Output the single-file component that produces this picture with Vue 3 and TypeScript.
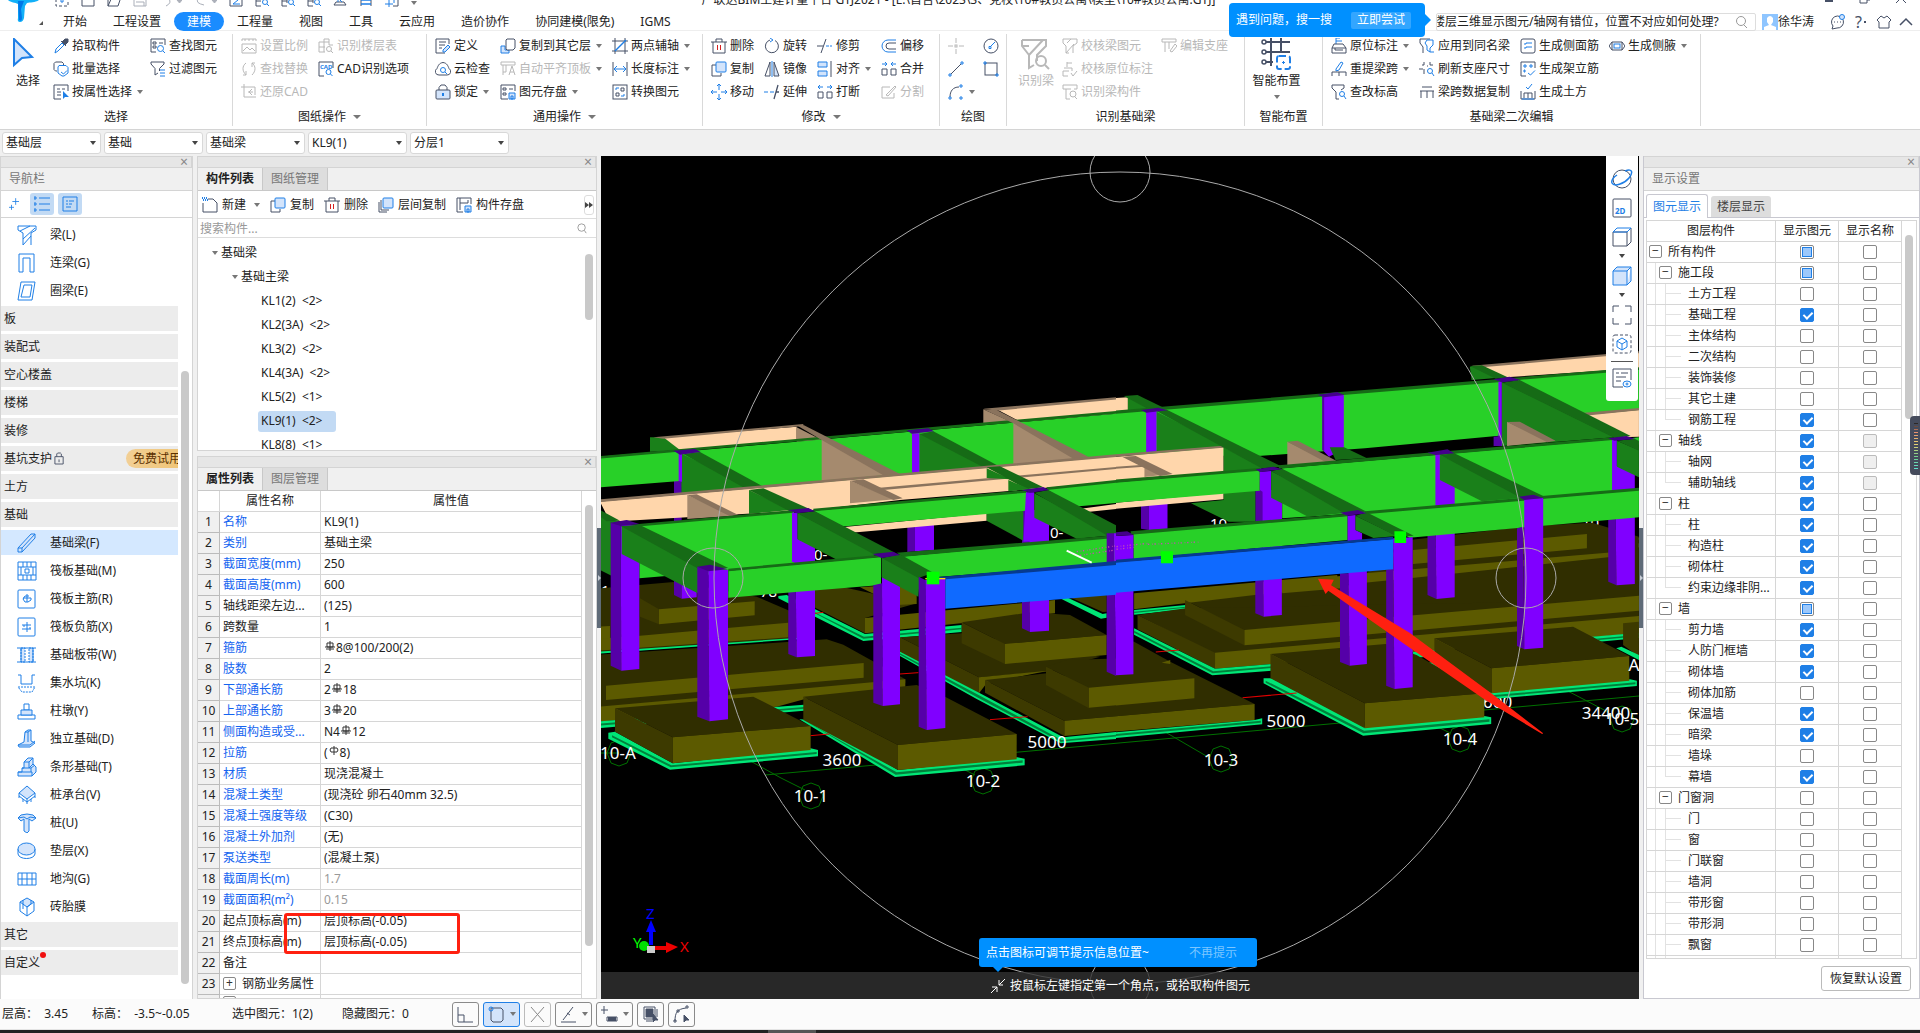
<script setup lang="ts">
interface Tool { icon: string; text: string; off?: boolean; arrow?: boolean }
interface Group { key: string; label: string; arrow?: boolean; big?: Tool; cols: Tool[][] }
type Poly = [string, string]

const icons: Record<string, string> = {
  pick: '<path class="b" d="M2 15l1-4 6-6 2 2-6 6z"/><path d="M8 3l5 5"/><path d="M9 4l3-3h3v3l-3 3z" fill="currentColor"/>',
  batch: '<path d="M4 10H2.500L1 8.500V2.500L2.500 1H9l1.500 1.500V4"/><path class="l" d="M6 4.500h7l2 2V12l-4 3h-2l-4-3V6z" style="fill:#fff"/><path class="b" d="M8 11l2.500 2L14 9.500"/>',
  prop: '<path d="M15 7V1H1v14h7M4 5h3M9 5h3M4 8h4M4 11h4"/><path class="f" d="M10 7v8l2-2h4z"/>',
  find: '<path d="M6 14H1V1h14v6M3 4h3v2H3zM3 8h3v2H3zM9 5h4"/><circle class="b" cx="10.500" cy="10.500" r="3"/><path class="b" d="M13 13l2 2"/>',
  filter: '<path d="M1 1h13v2L9.500 7.500V10M1 1v2l4 4.500V14l3-2"/><path class="b" d="M10 9h5M10 12h5M10 15h5"/>',
  scale: '<path d="M1 3V1h14v2M4 1v2M8 1v2M12 1v2M1 6h14v9H1zM2 13l4-4 3 3 2-2 3 3"/>',
  replace: '<path d="M5 2C1 5 1 10 5 14M11 2c4 3 4 8 0 12M5 14v-4M5 14H2M11 2v4M11 2h3"/>',
  restore: '<path d="M3 0v13h12M0 3h14v8M11 5L8 8l3 3M7 8h5"/>',
  floor: '<path d="M6 1v13M1 4h10M1 9h6M1 4v10h6M11 1v6h4M6 1h5"/><circle cx="11" cy="11" r="2.500"/><path d="M13 13l2 2"/>',
  cad: '<path d="M6 15H1V1h14v6"/><text x="2" y="8" font-size="6" font-weight="700" fill="#1f7fe6" stroke="none">CAD</text><circle class="b" cx="10.500" cy="11" r="2.500"/><path class="b" d="M12.500 13l2 2"/>',
  define: '<path d="M14 6V1H1v14h9M4 4h7M4 7h6M4 10h3"/><path class="l" d="M8 12l5-5 2 2-5 5H8z"/>',
  cloud: '<path d="M4 14a3.500 3.500 0 0 1-2-6.500C3 5 4 2 8 1.500c4 .5 5 3.500 6 6A3.500 3.500 0 0 1 12 14z"/><circle class="b" cx="8" cy="9" r="2.500"/><path class="b" d="M10 11l2 2"/>',
  lock: '<rect class="lf" x="1" y="6" width="14" height="9" rx="1"/><path d="M4 6V3.500L6 1h4l2 2.500V6"/><path class="b" d="M8 9v3" stroke-width="2"/>',
  tofloor: '<path class="l" d="M1 8h4v4h4v3H1z"/><path d="M7 1h7l1 1v8l-2 2H7L6 11V2z" fill="#fff"/>',
  align0: '<path d="M1 1h14v3H1zM3 4v10M6 4v7H3M9 14l3-9 3 9M10 11h4"/>',
  store: '<path d="M8 15H1V1h14v6M3 4h3v2H3zM3 9h3v2H3zM9 5h4"/><path class="l" d="M9 9h6v6H9zM11 12h2v3h-2z"/>',
  axis2: '<path d="M3 0v16M13 0v16M0 3h16M0 13h16"/><path class="b" d="M3 13L14 2" stroke-width="1.500"/>',
  length: '<path d="M1 1v14M15 1v14"/><path class="b" d="M2 8h12M5 5L2 8l3 3M11 5l3 3-3 3"/>',
  convert: '<rect x="1" y="1" width="14" height="14"/><path d="M4 9h3v3H4zM9 4h3v3H9z"/><path class="b" d="M4 6V4h3M12 10v2H9"/>',
  del: '<path d="M2 4v11h12V4M0 4h16M5 4V1h6v3"/><path class="r" d="M6.500 7v5M9.500 7v5"/>',
  copy: '<path d="M5 4H1v11h9v-3"/><rect class="l" x="5" y="1" width="10" height="10" rx="1"/>',
  move: '<path class="b" d="M8 0v6M8 10v6M0 8h6M10 8h6M6 2l2-2 2 2M6 14l2 2 2-2M2 6L0 8l2 2M14 6l2 2-2 2"/>',
  rotate: '<path d="M11 2.500A6.500 6.500 0 1 1 6 2"/><path class="b" d="M6 0l3 2-3 2"/>',
  mirror: '<path d="M6 1v14H1z"/><path class="lf" d="M10 1v14h5z"/><path class="b" d="M8 0v16"/>',
  extend: '<path class="b" d="M0 8h4M6 8h4"/><path d="M10 15l4-14M12 8h3" stroke-width="1.300"/>',
  trim: '<path d="M4 15L9 1M0 8h6"/><path class="b" d="M9 8h3M13 8h2"/>',
  align: '<path class="l" d="M1 1h9v5H1zM1 10h9v5H1z"/><path d="M14 0v16"/>',
  brk: '<path d="M1 8h5v6H1zM10 8h5v6h-5z"/><path class="b" d="M1 3h5M1 3l2-2M1 3l2 2M15 3h-5M15 3l-2-2M15 3l-2 2"/>',
  merge: '<path d="M1 8h5v6H1zM10 8h5v6h-5z"/><path class="b" d="M1 3h5M6 3L4 1M6 3L4 5M15 3h-5M10 3l2-2M10 3l2 2"/>',
  offset: '<path class="b" d="M15 2H7a6 6 0 0 0 0 12h8"/><path d="M15 5H8a3 3 0 0 0 0 6h7"/>',
  split: '<path d="M9 3H1v11h12V9M5 11l9-9 1 1-8 9z"/>',
  point: '<path d="M8 0v5M8 11v5M0 8h5M11 8h5"/><rect x="7" y="7" width="2" height="2"/>',
  circle: '<circle cx="8" cy="8" r="7"/><path class="b" d="M7 9l5-5M6 8.500h2v2H6z"/>',
  line: '<path d="M3 13L13 3"/><path class="b" d="M1 13h2v2H1zM13 1h2v2h-2z"/>',
  rect: '<rect x="2" y="2" width="12" height="12"/><path class="b" d="M1 1h2v2H1zM13 13h2v2h-2z"/>',
  arc: '<path d="M2 13C2 7 5 3 11 3"/><path class="b" d="M1 13h2v2H1zM12 1h2v2h-2zM12 13h2v2h-2z"/>',
  chk1: '<path d="M1 1h14v4l-4 3v7M1 1v4l3 3v7h3M4 15l8-9M5 5l4-4"/>',
  chk2: '<path d="M5 6V1M5 2h5M1 10h6M2 7h8v3M1 10v5h5M9 12l2 3 4-5"/>',
  chk3: '<path d="M1 1h14v4h-3M1 1v4h3v10h4M4 5h5"/><circle cx="11" cy="10" r="3"/><path d="M13 13l2 2"/>',
  seat: '<path d="M1 1h14v3H1zM4 4v10M8 4v7M9 13l5-7 2 2-5 6z"/>',
  orig: '<path class="b" d="M5 6V0h4M5 3h6"/><path d="M3 6h9l3 4v5H1v-5zM1 10h14M4 10v2h8"/>',
  respan: '<path class="b" d="M5 8l5-7 2 1-4 7-3 1z"/><path d="M1 15v-4h14v4M8 11v4"/>',
  elev: '<path d="M1 1h12v3l-3 2M1 1v3l4 4v7h3"/><circle class="b" cx="11" cy="10" r="2.500"/><path class="b" d="M13 12l2 3"/>',
  apply: '<path d="M4 15V9L1 5V1h10"/><path class="b" d="M6 5l2-3h6v5l-3 3v4l-3-2V8z"/><path class="b" d="M11 14h4"/>',
  refresh: '<path d="M0 8h4M5 1v3H3M11 1v3h3M5 8v5M8 5h1"/><circle class="b" cx="11" cy="10" r="2.500"/><path class="b" d="M13 12l2 3"/>',
  span: '<path d="M3 3h10M1 7h14M2 7v7M8 7v7M14 7v7"/>',
  side: '<rect x="1" y="1" width="14" height="14" rx="2"/><path class="b" d="M4 6h2V5h6M4 10h2V9h6"/>',
  erect: '<path d="M6 15H1V1h14v6"/><path class="b" d="M4 4h2v2H4zM10 4h2v2h-2zM4 9h1v2H4zM8 12l2.500 2L15 9.500"/>',
  earth: '<path d="M1 7v8h14V7M4 14V9h8v5M8 9v5"/><path class="b" d="M6 3l2 2 4-5M2 15h12"/>',
  haunch: '<path d="M3 4L0 8l3 4M13 4l3 4-3 4M3 4h10v8H3z"/><rect class="b" x="5" y="6" width="6" height="4"/>',
  newdoc: '<path d="M6 2h5l4 4v9H1V6"/><path class="b" stroke-dasharray="1 1" stroke-width="2" d="M0 1h5M1 3h5"/>',
  layers: '<path d="M1 5v10h8M3 3v10h8"/><rect class="l" x="5" y="1" width="10" height="10" rx="1"/>',
  save2: '<path d="M7 15H1V1h14v6M4 1v12M4 6h8V3"/><path class="l" d="M9 9h6v6H9zM11 12h2v3h-2z"/>',
}

const cursor = '<path d="M2 1l18 18-10 1-8 7z" fill="#d3e4fb" stroke="#1f7fe6" stroke-width="2"/>'
const beamBig = '<path d="M2 2h24v6l-9 9v6M2 2v6l7 9v13l5-3M9 17l14-15M2 8h7" stroke-width="2"/><circle cx="21" cy="23" r="5" stroke-width="2"/><path d="M25 27l4 4" stroke-width="2"/>'
const smart = '<path d="M5 4h24M5 14h24M5 24h7M10 0v28M20 0v14" stroke-width="2"/><g fill="#fff" stroke-width="1.500"><circle cx="3" cy="4" r="2"/><circle cx="3" cy="14" r="2"/><circle cx="3" cy="24" r="2"/></g><rect class="b" x="16" y="18" width="13" height="13" rx="2" stroke-width="2" stroke-dasharray="7 3"/><path class="b" d="M22.500 23v3M21 24.500h3"/>'

const t = (icon: string, text: string, flags = ''): Tool => ({ icon, text, off: flags.includes('x'), arrow: flags.includes('v') })

const groups: Group[] = [
  { key: 'select', label: '选择', big: t(cursor, '选择'), cols: [
    [t('pick', '拾取构件'), t('batch', '批量选择'), t('prop', '按属性选择', 'v')],
    [t('find', '查找图元'), t('filter', '过滤图元')] ] },
  { key: 'sheet', label: '图纸操作', arrow: true, cols: [
    [t('scale', '设置比例', 'x'), t('replace', '查找替换', 'x'), t('restore', '还原CAD', 'x')],
    [t('floor', '识别楼层表', 'x'), t('cad', 'CAD识别选项')] ] },
  { key: 'common', label: '通用操作', arrow: true, cols: [
    [t('define', '定义'), t('cloud', '云检查'), t('lock', '锁定', 'v')],
    [t('tofloor', '复制到其它层', 'v'), t('align0', '自动平齐顶板', 'xv'), t('store', '图元存盘', 'v')],
    [t('axis2', '两点辅轴', 'v'), t('length', '长度标注', 'v'), t('convert', '转换图元')] ] },
  { key: 'modify', label: '修改', arrow: true, cols: [
    [t('del', '删除'), t('copy', '复制'), t('move', '移动')],
    [t('rotate', '旋转'), t('mirror', '镜像'), t('extend', '延伸')],
    [t('trim', '修剪'), t('align', '对齐', 'v'), t('brk', '打断')],
    [t('offset', '偏移'), t('merge', '合并'), t('split', '分割', 'x')] ] },
  { key: 'draw', label: '绘图', cols: [
    [t('point', '', 'x'), t('line', ''), t('arc', '', 'v')],
    [t('circle', ''), t('rect', '')] ] },
  { key: 'identify', label: '识别基础梁', big: t(beamBig, '识别梁', 'x'), cols: [
    [t('chk1', '校核梁图元', 'x'), t('chk2', '校核原位标注', 'x'), t('chk3', '识别梁构件', 'x')],
    [t('seat', '编辑支座', 'x')] ] },
  { key: 'smart', label: '智能布置', big: t(smart, '智能布置', 'v'), cols: [] },
  { key: 'second', label: '基础梁二次编辑', cols: [
    [t('orig', '原位标注', 'v'), t('respan', '重提梁跨', 'v'), t('elev', '查改标高')],
    [t('apply', '应用到同名梁'), t('refresh', '刷新支座尺寸'), t('span', '梁跨数据复制')],
    [t('side', '生成侧面筋'), t('erect', '生成架立筋'), t('earth', '生成土方')],
    [t('haunch', '生成侧腋', 'v')] ] },
]

const menus = ['开始', '工程设置', '建模', '工程量', '视图', '工具', '云应用', '造价协作', '协同建模(限免)', 'IGMS']
const quick = [
  '<path d="M1 1v12h12V1" stroke-dasharray="3 2"/><path class="b" d="M6 6h2v3H6z"/>',
  '<path d="M1 1v12h12V1"/>', '<path d="M1 13L5 4h9l-3 9zM1 13V1"/>', '<path d="M1 1v12h12V1M3 9h8v4"/>',
]
const quick2 = [
  '<path d="M1 1v12h12V1"/><path class="b" d="M4 4l5 3-5 4h7"/>',
  '<path d="M1 1v12h5M1 8h5"/><circle class="b" cx="10" cy="9" r="2.500"/><path class="b" d="M12 11l2 2"/>',
  '<path d="M1 1v12h5M6 5v5M1 8h5"/><circle class="b" cx="10" cy="9" r="2.500"/><path class="b" d="M12 11l2 2"/>',
  '<path d="M1 1v12h5M1 8h5M6 5v5"/><circle class="b" cx="10" cy="9" r="2.500"/><path class="b" d="M12 11l2 2"/>',
  '<path d="M1 12h12l-2-3H3z"/><path class="b" d="M5 9V5l4 4"/>',
  '<path d="M2 0v13M12 0v13"/><path class="b" d="M2 7h10M2 11h10" stroke-width="1.500"/>',
  '<path d="M8 13h5V4"/><path class="b" d="M4 4v10M0 11h8M9 4v6"/>',
]
const combos = [['c1', '楼层', '基础层'], ['c2', '构件大类', '基础'], ['c3', '构件类型', '基础梁'], ['c4', '构件', 'KL9(1)'], ['c5', '分层', '分层1']]

const L = 'fill="#d3e4fb"'
const nav: { text: string; icon?: string }[] = [
  { text: '梁(L)', icon: '<path d="M1 1h18v4l-5 3v12M1 1v4l5 3v12M6 14L18 3M6 20l8-9M3 6l10-5"/>' },
  { text: '连梁(G)', icon: '<path d="M2 19V1h15v18h-4V5H6v14z"/>' },
  { text: '圈梁(E)', icon: '<path d="M4 1h14l-3 18H1zM7 4h8l-2 12H4z"/>' },
  { text: '板' }, { text: '装配式' }, { text: '空心楼盖' }, { text: '楼梯' }, { text: '装修' }, { text: '基坑支护' }, { text: '土方' }, { text: '基础' },
  { text: '基础梁(F)', icon: `<path ${L} d="M1 15L14 1h4v4L5 19H1zM1 15h4v4M5 15L18 1"/>` },
  { text: '筏板基础(M)', icon: '<path d="M1 1h18v18H1zM1 6h18M1 14h18M6 1v5M10 1v5M14 1v5M6 14v5M10 14v5M14 14v5M4 6v8M16 6v8M8 8h4v4H8z"/>' },
  { text: '筏板主筋(R)', icon: '<rect x="1" y="1" width="17" height="18" rx="1"/><path d="M12 7H8L6 10l2 3h3l3-2v-2H6M10 5v8"/>' },
  { text: '筏板负筋(X)', icon: '<rect x="1" y="1" width="17" height="18" rx="1"/><path d="M5 8h9M5 12h9M10 5v10M7 8v2M13 12v-2"/>' },
  { text: '基础板带(W)', icon: `<path ${L} d="M4 3h4v14H4zM12 3h4v14h-4z" stroke-dasharray="2 1"/><path d="M0 3h19M0 17h19M4 3v14M16 3v14"/>` },
  { text: '集水坑(K)', icon: '<path d="M1 2h3v9h11V2h3"/><path d="M1 14h17l-3 5H5z" stroke-dasharray="2 1"/>' },
  { text: '柱墩(Y)', icon: `<path d="M7 3h5v6H7zM1 14h17v4H1z"/><path ${L} d="M4 9h11v5H4z"/>` },
  { text: '独立基础(D)', icon: `<path ${L} d="M8 3l3-2h3v11l4 2-5 4H2l-1-2 6-3z"/><path d="M8 3h3v10M1 16h12l5-4M11 3l3-2"/>` },
  { text: '条形基础(T)', icon: `<path ${L} d="M1 15h4v-4h2V5l4-4h5v6l3 3v5l-4 4H1z"/><path d="M7 5h5l4-4M12 5v6l4-4M5 11h9v4M1 15h14v4M14 11l4-3"/>` },
  { text: '桩承台(V)', icon: `<path ${L} d="M2 8l8-7 8 7-8 6z"/><path d="M2 8v5M18 8v5M10 14v5M2 11l8 6 8-6M6 14v3M14 14v3"/>` },
  { text: '桩(U)', icon: `<path ${L} d="M1 5l3-3 6-1 6 1 3 3-4 3-3-2v12l-2 2-3-2V6L4 8z"/><path d="M1 5l6-1 3 2 3-2 6 1"/>` },
  { text: '垫层(X)', icon: `<path d="M1 8v5c1 6 16 6 17 0V8"/><ellipse ${L} cx="9.500" cy="8" rx="8.500" ry="6"/>` },
  { text: '地沟(G)', icon: '<path d="M1 4h18v12H1zM5 4v12M10 4v12M15 4v12M1 10h18"/>' },
  { text: '砖胎膜', icon: `<path ${L} d="M10 1l7 4-7 5-7-5z"/><path d="M3 5v9l7 5 7-5V5M10 10v9M6 3v9M14 3v4l-4 3"/>` },
  { text: '其它' }, { text: '自定义' },
]

const members = ['KL1(2)  <2>', 'KL2(3A)  <2>', 'KL3(2)  <2>', 'KL4(3A)  <2>', 'KL5(2)  <1>', 'KL9(1)  <2>', 'KL8(8)  <1>']

const props: [string, string, string][] = [
  ['名称', 'KL9(1)', 'b'], ['类别', '基础主梁', 'b'], ['截面宽度(mm)', '250', 'b'], ['截面高度(mm)', '600', 'b'],
  ['轴线距梁左边...', '(125)', ''], ['跨数量', '1', ''], ['箍筋', '#8@100/200(2)', 'b'], ['肢数', '2', 'b'],
  ['下部通长筋', '2#18', 'b'], ['上部通长筋', '3#20', 'b'], ['侧面构造或受...', 'N4#12', 'b'], ['拉筋', '($8)', 'b'],
  ['材质', '现浇混凝土', 'b'], ['混凝土类型', '(现浇砼 卵石40mm 32.5)', 'b'], ['混凝土强度等级', '(C30)', 'b'], ['混凝土外加剂', '(无)', 'b'],
  ['泵送类型', '(混凝土泵)', 'b'], ['截面周长(m)', '1.7', 'bg'], ['截面面积(m²)', '0.15', 'bg'],
  ['起点顶标高(m)', '层顶标高(-0.05)', ''], ['终点顶标高(m)', '层顶标高(-0.05)', ''], ['备注', '', ''], ['钢筋业务属性', '', 'e'], ['', '', 'e'],
]
const parts = (v: string): string[] => v.split(/([#$])/).filter(s => s !== '')

/* level, name, element state (0 off, 1 on, 2 partial), name box enabled */
const layers: [number, string, number, number][] = [
  [0, '所有构件', 2, 1], [1, '施工段', 2, 1], [2, '土方工程', 0, 1], [2, '基础工程', 1, 1], [2, '主体结构', 0, 1], [2, '二次结构', 0, 1],
  [2, '装饰装修', 0, 1], [2, '其它土建', 0, 1], [3, '钢筋工程', 1, 1], [1, '轴线', 1, 0], [2, '轴网', 1, 0], [3, '辅助轴线', 1, 0],
  [1, '柱', 1, 1], [2, '柱', 1, 1], [2, '构造柱', 1, 1], [2, '砌体柱', 1, 1], [3, '约束边缘非阴...', 1, 1], [1, '墙', 2, 1],
  [2, '剪力墙', 1, 1], [2, '人防门框墙', 1, 1], [2, '砌体墙', 1, 1], [2, '砌体加筋', 0, 1], [2, '保温墙', 1, 1], [2, '暗梁', 1, 1],
  [2, '墙垛', 0, 1], [3, '幕墙', 1, 1], [1, '门窗洞', 0, 1], [2, '门', 0, 1], [2, '窗', 0, 1], [2, '门联窗', 0, 1], [2, '墙洞', 0, 1],
  [2, '带形窗', 0, 1], [2, '带形洞', 0, 1], [2, '飘窗', 0, 1], [2, '', 0, 1],
]

const views = [
  '<circle cx="11" cy="11" r="9"/><path class="b" d="M14 3c8-3 8 2 4 7-5 6-15 9-17 5-1-3 2-6 5-8" stroke-width="1.500"/>',
  '<rect x="2" y="2" width="18" height="18" rx="1"/><text x="4" y="17" font-size="8" font-weight="700" fill="#1f7fe6" stroke="none">2D</text>',
  '<path d="M2 6h14v14H2zM16 20l4-4V2"/><path class="b" d="M2 6l4-4h14l-4 4z"/>',
  'v',
  '<path class="l" d="M2 6h14v14H2zM2 6l4-4h14l-4 4M16 20l4-4V2"/>',
  'v',
  '<path d="M2 8V2h6M14 2h6v6M20 14v6h-6M8 20H2v-6"/>',
  '<rect x="2" y="2" width="18" height="18" rx="2" stroke-dasharray="3 2"/><path class="b" d="M11 5l5 3v6l-5 3-5-3V8zM6 8l5 3 5-3M11 11v6"/>',
  '-',
  '<path d="M12 20H2V2h18v11M5 6h3M10 6h7M5 10h10M5 14h5"/><ellipse class="b" cx="16" cy="17" rx="4" ry="3"/><circle class="b" cx="16" cy="17" r="1"/>',
]

const G = '#28d028', GT = '#166b16', GS = '#1a801a', P = '#ffd6ab', PT = '#8a735d', PS = '#a58a6e'
const V = '#8000ff', VS = '#5500a8', VT = '#44008a', OT = '#302e00', OF = '#5c5a00', OS = '#3d3a00'
const M = '#00e676', MF = '#00803c'

const left: Poly[] = [
  [OT, '0,715 230,695 470,740 645,815 645,862 0,910'], [OF, '177,778 464,754 464,796 177,823'], [OS, '120,745 177,778 177,823 120,800'],
  [OF, '0,830 30,828 30,866 0,868'], [OF, '120,857 565,818 565,862 0,902 0,866'], [M, '0,905 645,860 645,864 0,911'],
  [OT, '0,914 680,868 730,884 916,988 916,1000 0,1085'], [OF, '18,1007 791,939 791,983 18,1050'], [OF, '0,1070 916,988 916,1012 640,1040 530,1070 0,1115'],
  [M, '0,1114 612,1064 612,1082 0,1134'], [MF, '0,1121 612,1071 612,1076 0,1127'],
  [M, '535,738 560,735 795,852 1085,825 1085,846 790,873 535,745'], [MF, '550,740 792,860 1085,833 1085,838 790,866'],
  [OS, '640,718 700,705 950,760 795,804 795,850 590,745'], [OF, '780,712 950,700 950,762 890,765'], [OF, '795,804 1365,750 1365,790 795,850'],
  [M, '1380,745 1400,742 1508,792 1520,790 1520,803 1503,806'], [OS, '1410,742 1520,735 1520,785 1508,786'],
  [OT, '900,862 1085,850 1500,920 1340,965 1137,982'], [OS, '900,862 1137,982 1137,1030 900,908'], [OF, '1137,982 1345,962 1160,1000 1137,1030'],
  [OT, '1085,817 1290,787 1410,795 1520,855 1215,882'], [OS, '1085,817 1215,882 1215,942 1085,880'], [OF, '1215,882 1520,855 1520,915 1215,942'],
  [M, '900,905 1140,1030 1390,1162 1560,1145 1560,1166 1382,1180 1130,1047 900,918'], [MF, '900,910 1140,1037 1385,1170 1560,1153 1560,1158 1382,1175 1130,1041 900,914'],
  [OT, '1155,990 1340,970 1560,1000 1560,1098 1393,1112'], [OS, '1155,990 1393,1112 1393,1158 1155,1028'], [OF, '1393,1112 1560,1098 1560,1143 1393,1158'],
  [OT, '1338,950 1400,930 1560,925 1560,1005 1467,1013'], [OS, '1338,950 1467,1013 1467,1075 1338,1005'], [OF, '1467,1013 1560,1005 1560,1065 1467,1073'],
  [M, '25,1148 45,1145 218,1240 632,1195 654,1200 654,1219 210,1259 25,1166'], [MF, '36,1156 214,1246 650,1206 650,1212 212,1252 36,1162'],
  [OT, '45,1075 460,1040 632,1128 218,1162'], [OS, '45,1075 218,1162 218,1240 45,1145'], [OF, '218,1162 632,1128 632,1200 218,1240'],
  [M, '598,1108 640,1110 894,1260 1252,1222 1274,1226 1274,1246 885,1281'], [MF, '615,1112 890,1267 1268,1231 1268,1238 887,1274'],
  [OT, '610,1040 950,1005 1035,1040 1250,1152 894,1185'], [OS, '610,1040 894,1185 894,1260 610,1110'], [OF, '894,1185 1250,1152 1250,1228 894,1260'],
  [VS, '222,390 245,390 245,746 222,735'], [V, '245,700 290,725 290,742 245,746'],
  [VS, '922,528 945,528 945,604 922,606'], [V, '945,525 1002,522 1002,600 945,604'],
  [VS, '1266,480 1287,480 1290,846 1266,835'], [V, '1287,480 1347,480 1347,842 1290,846'],
  [VS, '565,690 587,690 590,922 565,912'], [V, '587,690 645,690 645,918 590,922'], [V, '577,560 645,590 645,640 577,640'],
  [GS, '150,262 190,262 250,300 150,305'], [P, '190,262 590,230 590,270 240,300'], [PT, '160,262 610,222 610,228 190,266'],
  [PS, '590,232 665,270 590,275'], [P, '1190,178 1560,145 1560,190 1260,215'], [PT, '1150,176 1560,141 1560,147 1190,182'], [PS, '1150,178 1240,218 1150,222'],
  [G, '0,320 240,300 240,393 0,412'], [G, '245,305 1560,190 1560,325 245,432'], [GT, '0,318 1560,182 1560,190 0,326'],
  [PS, '665,268 870,374 665,392'], [PT, '590,226 612,226 900,372 850,376 665,270'],
  [PS, '1240,218 1440,324 1240,346'], [PT, '1150,178 1190,180 1465,320 1420,326 1240,220'],
  [GS, '246,312 460,415 246,430'], [GT, '250,312 300,306 500,415 440,418'], [V, '236,310 246,310 246,395 236,393'], [VT, '220,302 285,297 302,306 240,314'],
  [GS, '958,250 1160,352 958,366'], [GT, '958,252 1000,244 1200,350 1150,352'], [V, '936,250 958,250 958,366 936,368'], [VT, '920,241 985,235 1002,244 935,251'],
  [P, '0,455 880,378 1560,318 1560,395 900,450 640,480 30,515'], [PT, '0,448 880,372 1560,312 1560,320 0,456'], [PT, '830,414 1560,350 1560,356 850,420'],
  [PS, '262,435 400,497 262,507'], [PT, '262,435 290,433 415,495 390,499'], [PS, '750,392 885,448 750,460'], [PT, '750,392 790,388 908,445 880,450'],
  [GS, '447,420 570,480 447,492'], [GT, '447,420 490,415 640,482 575,487'], [GS, '1160,355 1232,388 1160,384'], [GT, '1160,352 1200,349 1330,412 1280,418'], [GS, '1225,390 1290,418 1225,424'],
  [P, '710,533 1160,490 1160,512 745,549'], [GS, '1160,485 1270,475 1270,572 1160,512'], [P, '1415,480 1560,460 1560,476 1440,488'],
  [GS, '0,485 60,520 60,690 0,660'], [G, '80,528 582,485 582,640 385,662 118,685 118,600'], [GT, '90,524 580,480 580,488 90,532'], [GT, '0,480 60,512 20,514 0,500'],
  [G, '640,482 1280,425 1278,482 720,530'], [GT, '640,476 1280,420 1280,428 640,484'], [G, '1340,418 1560,393 1560,458 1420,470'], [GT, '1340,412 1560,389 1560,397 1340,420'],
  [GS, '592,488 830,612 760,655 592,568'], [GT, '592,490 645,484 885,608 820,612'], [V, '576,488 592,488 592,636 576,636'], [VT, '565,480 625,474 645,484 590,490'],
  [V, '1278,427 1303,427 1303,505 1347,528 1347,572 1270,575'], [GS, '1303,430 1545,555 1430,566 1303,503'], [GT, '1303,428 1345,420 1560,532 1560,550 1520,556'], [VT, '1266,420 1330,411 1347,420 1290,428'],
  [G, '385,662 843,620 843,705 385,743'], [GT, '385,656 843,614 843,622 385,664'], [G, '900,620 1545,560 1545,640 1000,682'], [GT, '890,608 1545,556 1545,564 910,620'],
  [VS, '32,518 62,525 64,962 32,947'], [V, '62,525 118,525 118,957 64,962'], [GS, '65,528 340,650 293,730 65,612'], [GT, '62,528 118,524 385,654 295,656'], [VT, '30,518 80,510 118,522 62,528'],
  [VS, '292,650 325,660 328,1114 292,1100'], [V, '325,660 384,660 384,1108 328,1114'], [VT, '292,650 330,644 384,658 325,664'],
  [VS, '820,706 846,700 848,1068 820,1058'], [V, '846,680 900,680 900,1063 848,1068'], [GS, '845,622 960,682 955,740 845,682'], [GT, '845,624 900,613 1000,668 955,684'], [VT, '818,612 880,605 900,615 845,624'],
  [VS, '956,680 976,690 980,1140 956,1130'], [V, '976,690 1036,685 1036,1134 980,1140'],
  [VS, '1520,550 1542,550 1548,978 1520,965'], [V, '1542,550 1560,550 1560,974 1548,978'],
  ['#0f6aff', '1036,685 1560,640 1560,733 1036,776'], ['#063a8f', '1010,682 1560,632 1560,644 1036,688'],
]

const right: Poly[] = [
  [OT, '870,600 1200,560 1400,548 1536,590 1536,770 390,870 218,780 700,735'], [OF, '70,760 660,705 660,742 420,765 70,808'],
  [M, '70,810 220,795 220,808 70,824'], [MF, '70,815 220,800 220,803 70,819'],
  [OF, '880,630 1385,582 1385,625 880,672'], [OF, '740,700 1460,637 1460,650 870,715 740,728'], [OF, '500,722 670,708 670,745 500,760'],
  [OT, '80,825 220,805 1536,780 1536,830 305,942'], [OF, '390,870 1536,767 1536,812 390,916'], [OS, '218,780 390,870 390,916 218,825'],
  [OF, '305,938 1536,828 1536,880 305,986'], [OS, '80,825 305,938 305,986 80,868'],
  [M, '70,865 305,986 470,972 470,992 297,1006 70,884'], [MF, '70,872 300,994 470,979 470,984 298,1000 70,878'],
  [M, '880,936 950,930 950,948 880,954'], [M, '1400,890 1536,878 1536,894 1420,905'], [MF, '1410,896 1536,884 1536,889 1420,900'],
  [OT, '0,890 70,905 175,965 420,1092 0,1130'], [OF, '150,968 175,960 175,972'], [OF, '0,1130 420,1092 420,1140 0,1176'], [OF, '0,1037 245,1015 245,1075 0,1098'],
  [M, '0,1178 420,1140 442,1135 442,1153 0,1196'], [MF, '0,1184 438,1142 438,1148 0,1190'],
  [OS, '1490,850 1536,845 1536,950 1490,915'], [M, '1470,925 1485,920 1536,945 1536,960'],
  [M, '922,968 945,966 1108,1058 1510,1018 1530,1022 1530,1038 1105,1078'], [MF, '940,972 1108,1066 1526,1027 1526,1033 1106,1072'],
  [OT, '942,895 1345,860 1508,948 1108,985'], [OS, '942,895 1108,985 1108,1060 942,970'], [OF, '1108,985 1508,948 1508,1022 1108,1060'],
  [M, '446,1015 470,1015 740,1162 1087,1128 1107,1132 1107,1152 735,1187 446,1030'], [MF, '452,1022 738,1172 1102,1138 1102,1145 736,1180 452,1028'],
  [OT, '466,942 800,912 890,945 1087,1060 740,1090'], [OS, '466,942 740,1090 740,1165 466,1015'], [OF, '740,1090 1087,1060 1087,1132 740,1165'],
  [VS, '90,495 112,495 112,570 90,566'], [V, '112,490 167,490 167,568 112,570'],
  [VS, '422,450 443,450 446,830 422,820'], [V, '443,450 499,450 499,825 446,830'],
  [VS, '922,580 946,580 948,777 922,765'], [V, '946,570 1001,570 1001,772 948,777'],
  [VS, '1447,530 1468,530 1471,736 1447,725'], [V, '1468,530 1524,530 1524,732 1471,736'],
  [P, '0,175 52,172 52,215 0,218'], [GS, '52,172 75,170 130,205 52,213'], [GT, '40,168 80,165 165,208 120,212'],
  [GS, '1045,80 1085,78 1150,112 1050,120'], [P, '1075,78 1440,45 1536,38 1536,85 1150,112'], [PT, '1050,77 1536,34 1536,40 1080,82'], [GT, '1045,78 1080,76 1155,112 1120,116'],
  [G, '0,218 1130,122 1130,287 740,325 430,348 0,345'], [GT, '0,213 1536,82 1536,92 0,223'], [G, '1185,120 1536,90 1536,210 1350,228 1185,150'],
  [P, '1345,228 1536,210 1536,290 1480,292'], [PT, '1335,222 1536,204 1536,211 1350,230'],
  [VS, '616,168 624,168 624,335 616,330'], [V, '622,168 679,165 679,326 636,350 622,335'], [VT, '603,164 660,156 680,165 622,172'],
  [V, '1128,125 1138,125 1138,318 1128,318'], [VS, '1114,290 1136,288 1136,318 1114,318'],
  [GS, '1138,126 1465,292 1290,306 1138,318'], [GT, '1138,128 1190,120 1512,288 1465,294'], [VT, '1113,118 1160,110 1192,120 1140,127'],
  [PS, '1153,245 1278,305 1153,318'], [PT, '1153,246 1190,245 1294,302 1270,307'],
  [PS, '515,305 640,368 515,380'], [PT, '515,305 545,302 657,362 630,368'], [GT, '638,322 680,322 745,354 655,360'],
  [G, '500,385 1460,298 1460,455 1000,500 500,535'], [GT, '490,376 1460,292 1460,300 490,386'],
  [GS, '135,215 335,318 135,335'], [P, '0,352 330,322 330,403 0,425'], [PT, '0,344 345,316 345,322 0,352'], [PT, '0,382 100,374 100,380 0,388'],
  [PS, '100,382 150,405 100,411'], [PT, '35,350 75,348 182,402 145,408'], [GS, '330,322 440,380 440,395 330,403'],
  [P, '0,490 330,458 330,478 0,508'], [GS, '330,455 422,450 422,545 345,545 235,490 330,480'],
  [GT, '135,213 165,209 500,380 440,385'], [G, '0,428 435,390 435,452 0,490'], [GT, '0,420 435,384 435,392 0,430'],
  [V, '105,215 135,213 135,333 105,336'], [VT, '90,210 140,203 167,211 105,218'],
  [V, '435,395 468,393 468,475 499,490 499,545 443,545 443,455 435,450'], [GS, '468,393 705,517 575,530 468,473'], [GT, '468,393 500,386 745,515 680,520'], [VT, '423,388 475,380 500,388 435,396'],
  [V, '945,343 958,343 958,418 1001,440 1001,500 945,500'], [GS, '958,345 1215,472 1080,484 958,420'], [GT, '958,345 1000,340 1258,468 1190,472'], [VT, '922,338 980,328 1000,340 945,345'],
  [V, '1458,300 1472,300 1472,378 1524,403 1524,455 1458,458'], [GS, '1472,302 1536,330 1536,412 1472,380'], [G, '1510,295 1536,292 1536,315'], [GT, '1472,302 1524,296 1536,303 1536,332'], [VT, '1447,295 1500,288 1525,297 1465,302'],
  [G, '68,580 690,527 690,600 68,658'], [GT, '60,574 690,521 690,529 60,584'], [G, '740,520 1536,450 1536,532 870,593'], [GT, '740,514 1536,443 1536,452 740,523'],
  [V, '690,527 713,525 713,570 732,580 732,602 690,605'], [GS, '713,527 835,588 765,594 713,570'], [GT, '713,527 745,517 882,587 835,590'], [VT, '668,518 720,510 745,520 690,527'],
  [VS, '668,700 692,700 696,977 668,966'], [V, '692,695 746,690 746,972 696,977'],
  [VS, '0,588 14,588 14,1006 0,1002'], [V, '14,588 68,585 68,1003 14,1006'], [VT, '0,578 50,574 68,584 15,588'],
  [VS, '1182,565 1200,560 1203,928 1182,918'], [V, '1203,478 1258,474 1258,923 1203,928'], [VT, '1187,470 1230,464 1258,474 1203,480'],
  [VS, '802,690 822,685 826,1047 802,1037'], [V, '822,595 879,592 879,1042 826,1047'],
  ['#0f6aff', '0,668 822,597 822,688 0,760'], ['#063a8f', '0,661 822,590 822,598 0,670'],
]
const arrow = '604,716 650,719 642,736 870,878 1110,1062 1258,1180 1255,1182 1090,1080 860,916 634,752 626,762'

const labels: [string, number, number][] = [
  ['10-A', 618, 759], ['3600', 842, 766], ['10-1', 811, 802], ['10-2', 983, 787], ['5000', 1047, 748], ['10-3', 1221, 766],
  ['5000', 1286, 727], ['10-4', 1460, 745], ['34400', 1606, 719], ['10-5', 1622, 725], ['A', 1634, 671],
]
const rings: [number, number][] = [[619, 753], [811, 796], [983, 781], [1221, 759], [1460, 739], [1622, 719]]
const hex = (x: number, y: number): string => `${x - 8},${y - 10} ${x},${y - 13} ${x + 8},${y - 10} ${x + 12},${y} ${x + 8},${y + 10} ${x},${y + 13} ${x - 8},${y + 10} ${x - 12},${y}`

const modes: [string, string, boolean][] = [
  ['<path d="M2 2v15h15M2 10h6v7"/>', '', false],
  ['<path d="M4 3h10l2 2v10l-2 2H6l-2-2z"/><circle class="b" cx="4" cy="4" r="2"/>', 'on', true],
  ['<path d="M3 2l13 15M16 2L3 17"/>', 'dim', false],
  ['<path d="M2 17h15M4 15L14 2M8 8l3 2"/>', '', true],
  ['<path d="M1 5h7M4 1v8M7 12h10v4H7z"/><path d="M8 14h8" stroke-width="4"/>', '', true],
  ['<path d="M3 2h11v12H3zM16 4v8M5 16h6"/><path d="M5 4h7v8H5z" fill="currentColor"/><path d="M12 9v8l2-2h3z" fill="currentColor"/>', '', false],
  ['<path d="M3 16C3 8 5 4 14 3"/><path d="M2 15h2v2H2zM5 5h2v2H5zM14 1h2v2h-2z"/><path d="M12 10v7l2-2h3z" fill="currentColor"/>', '', false],
]
</script>

<template>
  <div class="app">
    <header class="top">
      <svg class="logo" viewBox="0 0 50 31" aria-label="广联达">
        <path d="M8 0h31c-4 3-9 2-12 3l-2 3-1 12q-1 4-4 4t-2-4L18 4C15 2 11 3 8 0z" fill="#12b0f8" />
        <path d="M18 1h6l-3 8 1 9q0 4-3 2z" fill="#0078e8" />
        <path d="M43 21v4h-4z" fill="#555" />
      </svg>
      <div class="top-main">
        <div class="title-row">
          <div class="quick">
            <svg v-for="(d, i) in quick" :key="i" class="ic" :class="{ faint: i === 3 }" viewBox="0 0 14 14" v-html="d"></svg>
            <svg class="ic wide faint" viewBox="0 0 23 14"><path d="M2 6h8q3 4-3 7M2 6l4-4" /><path d="M18 7h5l-2.500 3z" fill="currentColor" /></svg>
            <svg class="ic wide faint" viewBox="0 0 23 14"><path d="M10 12Q1 10 4 6h8" /><path d="M18 7h5l-2.500 3z" fill="currentColor" /></svg>
            <svg v-for="(d, i) in quick2" :key="'q' + i" class="ic" viewBox="0 0 14 14" v-html="d"></svg>
            <i class="tri quick-tri"></i>
          </div>
          <div class="title">广联达BIM土建计量平台 GTJ2021 - [E:\首咨\2023\3、党校\10#教员公寓\模型\10#教员公寓.GTJ]</div>
          <div class="win">
            <svg class="ic" viewBox="0 0 14 14"><path d="M3 10h8" stroke-width="2" /></svg>
            <svg class="ic" viewBox="0 0 14 14"><path d="M2 5h7v7H2zM5 5V2h7v7H9" /></svg>
            <svg class="ic" viewBox="0 0 14 14"><path d="M2 2l10 10M12 2L2 12" /></svg>
          </div>
        </div>
        <div class="menu-row">
          <nav class="menus">
            <button v-for="m in menus" :key="m" class="menu" :class="{ active: m === '建模' }">{{ m }}</button>
          </nav>
          <div class="user">
            <label class="help-search">
              <input type="text" aria-label="帮助搜索" value="楼层三维显示图元/轴网有错位，位置不对应如何处理?" />
              <svg class="ic" viewBox="0 0 14 14"><circle cx="6" cy="6" r="4.500" /><path d="M9 10l3 3" /></svg>
            </label>
            <svg class="avatar" viewBox="0 0 16 16"><path d="M0 0h16v16H0z" fill="#8ec5ff" /><path d="M5 4q3-4 6 0v4l-2 3 5 2v3H2v-3l5-2-2-3zM4 5h8" fill="#fff" /></svg>
            <span class="uname">徐华涛</span>
            <svg class="ic u" viewBox="0 0 16 16"><path d="M4 12a6 6 0 1 1 4 2l-5 1zM5 8h1M8 8h1M11 8h1" /><circle cx="13" cy="3" r="2.500" class="l" /></svg>
            <span class="q">?<i></i></span>
            <svg class="ic u" viewBox="0 0 16 16"><path d="M5 2l3 2 3-2 4 4-2 2v6H3V8L1 6z" /></svg>
            <svg class="ic u" viewBox="0 0 16 16"><path d="M2 11l6-6 6 6" stroke-width="1.500" /></svg>
          </div>
        </div>
      </div>
      <div class="ask">
        <span>遇到问题，搜一搜</span>
        <button>立即尝试</button>
      </div>
    </header>

    <section class="ribbon">
      <div v-for="g in groups" :key="g.key" class="group" :class="'g-' + g.key">
        <div class="tools">
          <button v-if="g.big" class="big" :class="{ off: g.big.off }">
            <svg class="ic" viewBox="0 0 32 32" v-html="g.big.icon"></svg>
            <span>{{ g.big.text }}</span>
            <i v-if="g.big.arrow" class="tri"></i>
          </button>
          <div v-for="(c, i) in g.cols" :key="i" class="col">
            <button v-for="b in c" :key="b.icon" class="tool" :class="{ off: b.off }" :aria-label="b.text || b.icon">
              <svg class="ic" viewBox="0 0 16 16" v-html="icons[b.icon]"></svg>
              <span v-if="b.text">{{ b.text }}</span>
              <i v-if="b.arrow" class="tri"></i>
            </button>
          </div>
        </div>
        <div class="glabel">{{ g.label }}<i v-if="g.arrow" class="tri lg"></i></div>
      </div>
    </section>

    <section class="combos">
      <div v-for="c in combos" :key="c[0]" class="combo">
        <select :id="c[0]" :aria-label="c[1]"><option>{{ c[2] }}</option></select>
        <i class="tri"></i>
      </div>
    </section>

    <main class="main">
      <aside class="nav">
        <div class="strip"><button aria-label="关闭">×</button></div>
        <h2 class="ptitle">导航栏</h2>
        <div class="nav-bar">
          <svg class="ic plus" viewBox="0 0 12 14"><path class="b" d="M8 0v8M4 4h8M3 8v6M0 11h6" /></svg>
          <button class="on" aria-label="列表"><svg class="ic" viewBox="0 0 16 16"><path class="b" d="M5 2h11M5 8h11M5 14h11M0 1h2v2H0zM0 7h2v2H0zM0 13h2v2H0z" /></svg></button>
          <button class="on" aria-label="面板"><svg class="ic" viewBox="0 0 16 16"><path class="b" d="M1 1h14v14H1zM4 5h2M7 5h5M4 8h2M7 8h3M4 11h5" /></svg></button>
        </div>
        <div class="scroller">
          <div class="nav-list">
            <button v-for="n in nav" :key="n.text" class="nav-item" :class="{ cat: !n.icon, sel: n.text === '基础梁(F)' }">
              <svg v-if="n.icon" class="ic nic" viewBox="0 0 20 20" v-html="n.icon"></svg>
              <span>{{ n.text }}</span>
              <svg v-if="n.text === '基坑支护'" class="ic pad" viewBox="0 0 12 14"><path d="M1 5h9v8H1zM3 5V2l1-1h3l1 1v3M5.500 8v3" /></svg>
              <em v-if="n.text === '基坑支护'">免费试用</em>
              <b v-if="n.text === '自定义'"></b>
            </button>
          </div>
          <div class="sbar"><i class="thumb t-nav"></i></div>
        </div>
      </aside>

      <div class="mid">
        <section class="panel list-panel">
          <div class="strip"><button aria-label="关闭">×</button></div>
          <div class="tabs"><button class="active">构件列表</button><button>图纸管理</button></div>
          <div class="ptools">
            <button class="tool"><svg class="ic" viewBox="0 0 16 16" v-html="icons.newdoc"></svg><span>新建</span><i class="tri"></i></button>
            <button class="tool"><svg class="ic" viewBox="0 0 16 16" v-html="icons.copy"></svg><span>复制</span></button>
            <button class="tool"><svg class="ic" viewBox="0 0 16 16" v-html="icons.del"></svg><span>删除</span></button>
            <button class="tool"><svg class="ic" viewBox="0 0 16 16" v-html="icons.layers"></svg><span>层间复制</span></button>
            <button class="tool"><svg class="ic" viewBox="0 0 16 16" v-html="icons.save2"></svg><span>构件存盘</span></button>
            <button class="more" aria-label="更多"><svg viewBox="0 0 8 6"><path d="M0 0l4 3-4 3zM4 0l4 3-4 3z" fill="#444" /></svg></button>
          </div>
          <label class="psearch">
            <input type="text" placeholder="搜索构件..." aria-label="搜索构件" />
            <svg class="ic" viewBox="0 0 14 14"><circle cx="6" cy="6" r="4" /><path d="M9 9l2 3" /></svg>
          </label>
          <div class="scroller">
            <ul class="tree">
              <li class="l0"><i class="tri"></i>基础梁</li>
              <li class="l1"><i class="tri"></i>基础主梁</li>
              <li v-for="m in members" :key="m" class="l2" :class="{ sel: m.startsWith('KL9') }"><span>{{ m }}</span></li>
            </ul>
            <div class="sbar"><i class="thumb t-tree"></i></div>
          </div>
        </section>

        <section class="panel prop-panel">
          <div class="strip"><button aria-label="关闭">×</button></div>
          <div class="tabs"><button class="active">属性列表</button><button>图层管理</button></div>
          <div class="scroller">
            <div class="tclip">
              <table class="props">
                <thead><tr><th class="no"></th><th class="nm">属性名称</th><th>属性值</th></tr></thead>
                <tbody>
                  <tr v-for="(p, i) in props" :key="i">
                    <td class="no">{{ p[0] ? i + 1 : '' }}</td>
                    <td :class="{ blue: p[2].includes('b') }"><i v-if="p[2] === 'e'" class="exp">{{ p[0] ? '+' : '' }}</i>{{ p[0] }}</td>
                    <td :class="{ grey: p[2].includes('g') }">
                      <template v-for="(s, k) in parts(p[1])" :key="k">
                        <svg v-if="s === '#'" class="bar" viewBox="0 0 10 10"><path d="M2 2h6v4H2zM5 0v10M0 6h10M1 8h8" /></svg>
                        <svg v-else-if="s === '$'" class="bar" viewBox="0 0 10 10"><path d="M2 2h6l1 2-1 2H2L1 4zM5 0v9" /></svg>
                        <template v-else>{{ s }}</template>
                      </template>
                    </td>
                  </tr>
                </tbody>
              </table>
              <div class="mark"></div>
            </div>
            <div class="sbar"><i class="thumb t-prop"></i></div>
          </div>
        </section>
      </div>

      <button class="fold" aria-label="收起左侧"><i></i></button>

      <section class="canvas">
        <svg class="scene" viewBox="601 156 1038 843" preserveAspectRatio="xMidYMid slice">
          <defs>
            <clipPath id="cl"><path d="M601 156h515v843H601z" /></clipPath>
            <clipPath id="cr"><path d="M1116 156h523v843h-523z" /></clipPath>
          </defs>
          <g stroke="#007000" fill="none">
            <path d="M765 775L1639 696M745 758l36 20 24 12M955 765l20 10M1160 729l48 28M1430 723l20 10M1560 687l48 25M601 753h18" />
            <polygon v-for="(r, i) in rings" :key="i" :points="hex(r[0], r[1])" />
          </g>
          <g fill="#fff" font-size="15"><text x="601" y="596">1</text><text x="760" y="597">78</text><text x="814" y="560">0-</text><text x="1050" y="538">0-</text><text x="1210" y="529">10</text><text x="1582" y="528">10</text><text x="1632" y="548">S</text><text x="1483" y="708" font-size="17">600</text></g>
          <g clip-path="url(#cl)"><g transform="translate(600 350) scale(.33333)"><polygon v-for="(p, i) in left" :key="i" :fill="p[0]" :points="p[1]" /><path d="M645 790l25-3M900 972l55-4M1170 1109l113-9M632 1157l56-5" stroke="#e00000" stroke-width="3" /><path d="M1400 602l75 36" stroke="#fff" stroke-width="6" /><path d="M1430 605L1545 588M1440 616L1545 600" stroke="#c050b0" stroke-width="4" stroke-dasharray="4 8 2 5" /><path d="M976 686h60" stroke="#fd0" stroke-width="4" /><path d="M980 665h38v38h-38z" fill="#0f0" /></g></g>
          <g clip-path="url(#cr)"><g transform="translate(1110 340) scale(.34435 .33333)"><polygon v-for="(p, i) in right" :key="i" :fill="p[0]" :points="p[1]" /><path d="M133 936l67-6M385 1073l157-14" stroke="#e00000" stroke-width="3" /><path d="M0 622L110 610M0 630l70-8M110 613l150-7" stroke="#c050b0" stroke-width="4" stroke-dasharray="4 8 2 5" /><path d="M148 634h35v36h-35zM826 574h34v35h-34z" fill="#0f0" /></g></g>
          <g fill="#fff" font-size="17" text-anchor="middle">
            <text v-for="(l, i) in labels" :key="i" :x="l[1]" :y="l[2]">{{ l[0] }}</text>
          </g>
          <g fill="none" stroke="#aaa">
            <circle cx="1120" cy="578" r="406" /><circle cx="1120" cy="172" r="30" /><circle cx="713" cy="578" r="30" /><circle cx="1526" cy="578" r="30" /><circle cx="1120" cy="984" r="30" />
          </g>
          <polygon transform="translate(1110 340) scale(.34435 .33333)" fill="#ff2010" :points="arrow" />
          <path d="M651 945V930" stroke="#00f" stroke-width="4" /><path d="M646 932l5-12 5 12z" fill="#00f" />
          <circle cx="644" cy="946" r="5" fill="#0d0" /><path d="M653 948h14" stroke="#e00" stroke-width="4" /><path d="M666 942l12 5-12 6z" fill="#e00" /><path d="M647 946h8v7h-8z" fill="#ccc" />
          <g font-size="15"><text x="646" y="919" fill="#00f">Z</text><text x="633" y="948" fill="#0f0">Y</text><text x="680" y="952" fill="#e00">X</text></g>
        </svg>
        <div class="views">
          <template v-for="(v, i) in views" :key="i">
            <i v-if="v === 'v'" class="tri dark"></i>
            <hr v-else-if="v === '-'" />
            <button v-else :aria-label="'视图' + i"><svg class="ic" viewBox="0 0 22 22" v-html="v"></svg></button>
          </template>
        </div>
        <div class="tip"><span>点击图标可调节提示信息位置~</span><button>不再提示</button></div>
        <div class="prompt">
          <svg class="ic" viewBox="0 0 16 16"><path d="M15 1L9 7M9 2v5h4M1 15l6-6M7 14V9H2" /></svg>
          <span>按鼠标左键指定第一个角点，或拾取构件图元</span>
        </div>
      </section>

      <button class="fold" aria-label="收起右侧"><i></i></button>

      <aside class="disp">
        <div class="strip"><button aria-label="关闭">×</button></div>
        <h2 class="ptitle wide">显示设置</h2>
        <div class="dtabs"><button class="active">图元显示</button><button>楼层显示</button></div>
        <div class="dbox">
          <div class="tclip">
            <table class="layers">
              <thead><tr><th>图层构件</th><th class="ck">显示图元</th><th class="ck">显示名称</th></tr></thead>
              <tbody>
                <tr v-for="(l, i) in layers" :key="i">
                  <td :class="'v' + l[0]"><i v-if="l[0] < 2" class="exp">−</i><i v-else class="twig"></i><span>{{ l[1] }}</span></td>
                  <td class="ck"><input type="checkbox" :checked="l[2] === 1" :class="{ part: l[2] === 2 }" :aria-label="l[1] + ' 显示图元'" /></td>
                  <td class="ck"><input type="checkbox" :disabled="!l[3]" :aria-label="l[1] + ' 显示名称'" /></td>
                </tr>
              </tbody>
            </table>
          </div>
          <div class="sbar"><i class="thumb t-disp"></i></div>
        </div>
        <div class="dfoot"><button>恢复默认设置</button></div>
        <div class="meter"><i></i></div>
      </aside>
    </main>

    <footer class="status">
      <div class="facts">
        <span class="f1">层高：&nbsp;&nbsp;3.45</span><span class="f2">标高：&nbsp;&nbsp;-3.5~-0.05</span><span class="f3">选中图元：1(2)</span><span>隐藏图元：0</span>
      </div>
      <div class="modes">
        <button v-for="(m, i) in modes" :key="i" :class="m[1]" :aria-label="'模式' + i">
          <svg class="ic" viewBox="0 0 19 19" v-html="m[0]"></svg><i v-if="m[2]" class="tri"></i>
        </button>
      </div>
    </footer>
    <div class="task"><i></i></div>
  </div>
</template>

<style>
html, body { background: #f0f0f0; overflow: hidden; }
</style>

<style scoped>
* { box-sizing: border-box; }
.app { height: 100vh; display: flex; flex-direction: column; font: 12px/16px "Noto Sans", "Noto Sans CJK SC", sans-serif; color: #222; background: #f0f0f0; overflow: hidden; }
button { font: inherit; color: inherit; background: none; border: 0; padding: 0; display: flex; align-items: center; white-space: nowrap; }
input, select { font: inherit; color: inherit; margin: 0; }
i { font-style: normal; }
.ic { width: 16px; height: 16px; flex: none; fill: none; stroke: currentColor; stroke-width: 1; color: #465066; }
.ic :deep(.b) { stroke: #1f7fe6; }
.ic :deep(.l) { stroke: #1f7fe6; fill: #d3e4fb; }
.ic :deep(.lf) { fill: #d3e4fb; }
.ic :deep(.f) { fill: #1f7fe6; stroke: none; }
.ic :deep(.r) { stroke: #d42020; }
.tri { width: 0; height: 0; flex: none; border: 3px solid transparent; border-top: 4px solid #777; border-bottom: 0; }
.tri.lg { border-width: 4px 4px 0; margin-left: 7px; }
.off, .off .ic { color: #b8b8b8; }
.off .ic :deep(.b) { stroke: currentColor; }

.top { display: flex; height: 31px; background: #fff; border-bottom: 1px solid #eee; position: relative; flex: none; }
.logo { width: 50px; height: 31px; flex: none; }
.top-main { flex: 1; min-width: 0; }
.title-row { height: 12px; display: flex; align-items: flex-start; overflow: hidden; }
.quick { flex: 1; display: flex; gap: 12px; padding-left: 5px; align-items: flex-start; }
.quick .ic { width: 14px; height: 14px; margin-top: -7px; }
.quick .ic.wide { width: 23px; }
.faint { opacity: .45; }
.quick-tri { margin-top: 1px; }
.title { margin-top: -8px; white-space: nowrap; margin-left: -46px; }
.win { flex: 1; display: flex; justify-content: flex-end; gap: 22px; padding-right: 12px; }
.win .ic { width: 14px; height: 14px; margin-top: -9px; }
.menu-row { display: flex; height: 19px; justify-content: space-between; }
.menus { display: flex; }
.menu { padding: 0 13px; border-radius: 10px; height: 19px; }
.menu.active { background: #1a8cff; color: #fff; }
.user { display: flex; align-items: center; padding-right: 6px; }
.help-search { display: flex; align-items: center; width: 320px; height: 18px; border: 1px solid #ddd; border-radius: 2px; margin-right: 6px; padding-right: 6px; }
.help-search input { border: 0; outline: 0; flex: 1; min-width: 0; padding: 0; height: 16px; background: none; text-indent: -4px; }
.help-search .ic { width: 14px; height: 14px; color: #999; }
.avatar { width: 16px; height: 16px; }
.uname { margin-right: 9px; }
.u { margin: 0 0 0 6px; width: 16px; }
.q { font-size: 16px; color: #465066; margin: 0 4px 0 10px; display: flex; align-items: center; gap: 2px; }
.q i { width: 2px; height: 2px; background: #465066; }
.ask { position: absolute; right: 495px; top: 3px; width: 196px; height: 34px; background: #0090ff; color: #fff; border-radius: 4px; display: flex; align-items: center; justify-content: space-between; padding: 0 14px 0 7px; z-index: 5; }
.ask::after { content: ""; position: absolute; left: 100%; top: 11px; border: 6px solid transparent; border-left-color: #0090ff; border-right: 0; }
.ask button { background: #33a6ff; border-radius: 2px; height: 17px; padding: 0 6px; }

.ribbon { display: flex; height: 99px; background: #fff; border-bottom: 1px solid #d4d4d4; padding-top: 3px; flex: none; overflow: hidden; }
.group { border-right: 1px solid #d9d9d9; height: 92px; display: flex; flex-direction: column; flex: none; }
.tools { display: flex; gap: 10px; padding: 0 0 0 8px; height: 70px; }
.col { display: flex; flex-direction: column; }
.tool { height: 23px; gap: 3px; }
.tool .tri { margin-left: 2px; }
.glabel { flex: 1; display: flex; align-items: center; justify-content: center; padding-top: 4px; }
.big { flex-direction: column; width: 36px; padding-top: 4px; }
.big .ic { width: 32px; height: 32px; }
.big span { margin-top: 3px; }
.big .tri { margin-top: 6px; }
.g-select { width: 233px; }
.g-select .tools { gap: 7px; padding-left: 10px; }
.g-sheet { width: 194px; }
.g-common { width: 276px; }
.g-modify { width: 237px; }
.g-draw { width: 67px; }
.g-draw .tools { gap: 8px; }
.g-identify { width: 238px; }
.g-identify .tools { padding-left: 11px; gap: 8px; }
.g-smart { width: 78px; }
.g-smart .tools { justify-content: center; padding-left: 0; margin-left: -14px; }
.g-smart .big { width: 48px; }
.g-second { width: 378px; }

.combos { display: flex; gap: 3px; height: 26px; padding: 2px 2px; flex: none; }
.combo { position: relative; width: 99px; height: 22px; }
.combo select { appearance: none; width: 100%; height: 100%; border: 1px solid #d8d8d8; border-radius: 3px; background: #fff; padding: 0 3px; outline: 0; }
.combo .tri { position: absolute; right: 5px; top: 9px; border-top-color: #444; }

.main { flex: 1; min-height: 0; display: flex; }
.strip { height: 12px; background: #e6e6e6; border: 1px solid #d4d4d4; border-left: 0; display: flex; justify-content: flex-end; align-items: center; flex: none; }
.strip button { font-size: 14px; line-height: 10px; height: 10px; color: #888; padding-right: 3px; }
.ptitle { margin: 0; font-size: 12px; font-weight: 400; color: #777; height: 23px; line-height: 22px; padding-left: 8px; background: #f0f0f0; border-bottom: 1px solid #d4d4d4; flex: none; }
.nav { width: 193px; background: #fff; border-right: 1px solid #d4d4d4; border-left: 1px solid #d4d4d4; display: flex; flex-direction: column; flex: none; margin-right: 4px; }
.nav-bar { height: 27px; border-bottom: 1px solid #d4d4d4; display: flex; align-items: center; gap: 4px; padding-left: 8px; flex: none; }
.nav-bar .plus { width: 10px; height: 12px; margin-right: 7px; }
.nav-bar .on { width: 24px; height: 22px; background: #c2daf4; border-radius: 3px; justify-content: center; }
.scroller { flex: 1; min-height: 0; display: flex; overflow: hidden; }
.nav-list { flex: 1; padding-top: 4px; display: flex; flex-direction: column; gap: 3px; }
.nav-item { height: 25px; flex: none; padding-left: 16px; position: relative; }
.nav-item.cat { background: #ececec; padding-left: 3px; }
.nav-item.sel { background: #d4e8ff; }
.nic { width: 20px; height: 20px; color: #1f7fe6; margin-right: 13px; }
.pad { width: 11px; height: 13px; margin-left: 2px; }
.nav-item em { font-style: normal; margin-left: auto; background: linear-gradient(90deg, #f2cf95, #efc577); color: #5a3000; border-radius: 10px 0 0 10px; padding: 2px 0 2px 7px; height: 19px; line-height: 15px; margin-right: -3px; }
.nav-item.cat { overflow: hidden; }
.nav-item b { width: 6px; height: 6px; border-radius: 3px; background: #f01010; align-self: flex-start; margin-top: 2px; }
.sbar { width: 14px; flex: none; }
.thumb { display: block; width: 8px; margin: 0 auto; border-radius: 4px; background: #c9c9c9; }
.t-nav { margin-top: 153px; height: 613px; }
.t-tree { margin-top: 16px; height: 66px; }
.t-prop { margin-top: 14px; height: 441px; }
.t-disp { margin-top: 14px; height: 184px; }

.mid { width: 400px; flex: none; display: flex; flex-direction: column; gap: 5px; }
.panel { display: flex; flex-direction: column; background: #fff; border: 1px solid #d4d4d4; border-top: 0; }
.list-panel { height: 295px; flex: none; }
.prop-panel { flex: 1; min-height: 0; }
.tabs { height: 23px; display: flex; background: #f0f0f0; border-bottom: 1px solid #c8c8c8; flex: none; }
.tabs button { width: 65px; justify-content: center; background: #ddd; color: #777; border: 1px solid #c8c8c8; border-width: 0 1px 0 0; }
.tabs .active { background: #f0f0f0; color: #222; font-weight: 700; }
.ptools { height: 28px; display: flex; align-items: center; gap: 10px; padding: 0 2px 0 4px; border-bottom: 1px solid #ddd; flex: none; }
.ptools .tool { gap: 4px; }
.ptools .tool .tri { margin-left: 4px; }
.more { margin-left: auto; border: 1px solid #ddd; border-radius: 3px; width: 10px; height: 20px; justify-content: center; }
.more svg { width: 8px; height: 6px; flex: none; }
.psearch { height: 19px; display: flex; align-items: center; border-bottom: 1px solid #ddd; padding: 0 7px 0 2px; flex: none; }
.psearch input { flex: 1; border: 0; outline: 0; padding: 0; height: 17px; }
.psearch input::placeholder { color: #999; }
.psearch .ic { color: #999; width: 13px; height: 13px; }
.tree { list-style: none; margin: 0; padding: 3px 0 0; flex: 1; }
.tree li { height: 24px; display: flex; align-items: center; gap: 3px; white-space: pre; }
.tree .l0 { padding-left: 14px; }
.tree .l1 { padding-left: 34px; }
.tree .l2 { padding-left: 60px; }
.tree .l2 span { padding: 2px 14px 3px 3px; border-radius: 3px; }
.tree .sel span { background: #c2daf4; }

.tclip { flex: 1; min-width: 0; overflow: hidden; position: relative; }
table { border-collapse: separate; border-spacing: 0; table-layout: fixed; width: 100%; }
th, td { font-weight: 400; height: 21px; padding: 0; border-right: 1px solid #d6d6d6; border-bottom: 1px solid #d6d6d6; white-space: nowrap; overflow: hidden; line-height: 16px; }
.props td { padding-left: 3px; }
.props .no { width: 22px; background: #f0f0f0; text-align: center; padding: 0; border-color: #bbb; }
.props th.no { background: #fff; border-color: #d6d6d6; }
.props .nm { width: 101px; }
.blue { color: #1464f0; }
.grey { color: #999; }
.bar { width: 10px; height: 10px; fill: none; stroke: #333; vertical-align: 1px; margin: 0 1px; }
.exp { display: inline-block; width: 13px; height: 13px; border: 1px solid #888; border-radius: 2px; line-height: 10px; text-align: center; margin-right: 6px; vertical-align: 1px; color: #333; background: #fff; }
.mark { position: absolute; left: 86px; top: 422px; width: 176px; height: 41px; border: 3px solid #ff2010; border-radius: 3px; }

.fold { width: 4px; flex: none; align-self: flex-start; height: 100px; margin-top: 372px; background: #5f6b78; justify-content: center; }
.fold i { border: 3px solid transparent; border-left-color: #c8ced6; border-right: 0; }

.canvas { flex: 1; min-width: 0; position: relative; background: #000; overflow: hidden; }
.scene { position: absolute; inset: 0; width: 100%; height: 100%; }
.views { position: absolute; right: 1px; top: 0; width: 32px; height: 245px; background: #fff; border-radius: 0 0 3px 3px; display: flex; flex-direction: column; align-items: center; padding-top: 12px; }
.views button { height: 22px; margin-bottom: 7px; }
.views .ic { width: 22px; height: 22px; }
.views .tri.dark { border-top-color: #444; margin: -1px 0 7px; }
.views hr { width: 22px; border: 0; border-top: 1px solid #555; margin: -1px 0 5px; }
.prompt { position: absolute; left: 0; right: 0; bottom: 0; height: 27px; background: rgba(50, 50, 50, .8); color: #fff; display: flex; align-items: center; justify-content: center; gap: 4px; }
.prompt .ic { color: #fff; }
.tip { position: absolute; left: 378px; bottom: 32px; width: 278px; height: 29px; background: #0090ff; color: #fff; border-radius: 3px; display: flex; align-items: center; justify-content: space-between; padding: 0 20px 0 7px; }
.tip::after { content: ""; position: absolute; left: 14px; top: 100%; border: 5px solid transparent; border-top-color: #0090ff; border-bottom: 0; }
.tip button { color: #7cc6ff; }

.disp { width: 277px; flex: none; background: #fff; border: 1px solid #c8c8d0; border-top: 0; display: flex; flex-direction: column; position: relative; }
.dtabs { height: 27px; display: flex; gap: 3px; align-items: flex-end; padding-left: 2px; border-bottom: 1px solid #c8c8d0; flex: none; }
.dtabs button { height: 21px; width: 60px; justify-content: center; background: #ddd; border-radius: 3px 3px 0 0; color: #444; }
.dtabs .active { height: 24px; width: 62px; background: #fff; border: 1px solid #c8c8d0; border-bottom: 0; color: #1f7fe6; margin-bottom: -1px; }
.dbox { flex: 1; min-height: 0; display: flex; margin: 2px 2px 0; border: 1px solid #d6d6d6; }
.layers .ck { width: 63px; text-align: center; }
.layers td:first-child { background: linear-gradient(#e2e2e2, #e2e2e2) 8px 0 / 1px 100% no-repeat, linear-gradient(#e2e2e2, #e2e2e2) 18px 0 / 1px 100% no-repeat; }
.layers td:first-child.v0 { background: #fff; }
.layers td:first-child.v1 { background: linear-gradient(#e2e2e2, #e2e2e2) 8px 0 / 1px 100% no-repeat; }
.layers td:first-child.v3 { background: linear-gradient(#e2e2e2, #e2e2e2) 8px 0 / 1px 100% no-repeat, linear-gradient(#e2e2e2, #e2e2e2) 18px 0 / 1px 10px no-repeat; }
.v0 { padding-left: 2px; }
.v1 { padding-left: 12px; }
.v2, .v3 { padding-left: 18px; }
.twig { display: inline-block; width: 16px; height: 1px; background: #e2e2e2; vertical-align: 4px; margin-right: 7px; }
input[type="checkbox"] { appearance: none; width: 14px; height: 14px; border: 1px solid #888; border-radius: 2px; background: #fff; display: block; margin: 0 auto; position: relative; }
input[type="checkbox"]:checked { background: #1f7fe6; border-color: #1f7fe6; }
input[type="checkbox"]:checked::after { content: ""; position: absolute; left: 4px; top: 1px; width: 4px; height: 7px; border: solid #fff; border-width: 0 2px 2px 0; transform: rotate(45deg); }
input[type="checkbox"].part::after { content: ""; position: absolute; inset: 1px; background: #9cc8fb; border: 1px solid #1f7fe6; }
input[type="checkbox"]:disabled { background: #efefef; border-color: #bbb; }
.dfoot { height: 39px; flex: none; display: flex; justify-content: flex-end; align-items: center; padding-right: 8px; }
.dfoot button { height: 25px; width: 90px; justify-content: center; border: 1px solid #bbb; border-radius: 3px; }
.meter { position: absolute; right: -1px; top: 260px; width: 10px; height: 59px; background: #454b5c; border-radius: 4px 0 0 4px; }
.meter i { position: absolute; left: 4px; top: 7px; width: 4px; height: 46px; background: repeating-linear-gradient(transparent 0 1px, #454b5c 1px 3px), linear-gradient(#222, #e89070 20%, #e8d070 45%, #70d090 75%, #60e0d0); }

.status { height: 31px; flex: none; background: #fbfbfb; display: flex; align-items: center; border-bottom: 1px solid #e4e4e4; }
.facts { display: flex; width: 452px; padding-left: 2px; }
.f1 { width: 90px; }
.f2 { width: 140px; }
.f3 { width: 110px; }
.modes { display: flex; gap: 4px; }
.modes button { height: 25px; min-width: 25px; border: 1px solid #8a8a8a; border-radius: 3px; justify-content: center; gap: 4px; padding: 0 3px; }
.modes .ic { width: 19px; height: 19px; }
.modes .on { background: #d3e4fb; border-color: #1f7fe6; }
.modes .dim { border-color: #bbb; }
.modes .dim .ic { color: #888; }
.task { height: 3px; flex: none; background: #222; }
.task i { display: block; margin-left: 40%; width: 48px; height: 3px; background: #555; }
</style>
